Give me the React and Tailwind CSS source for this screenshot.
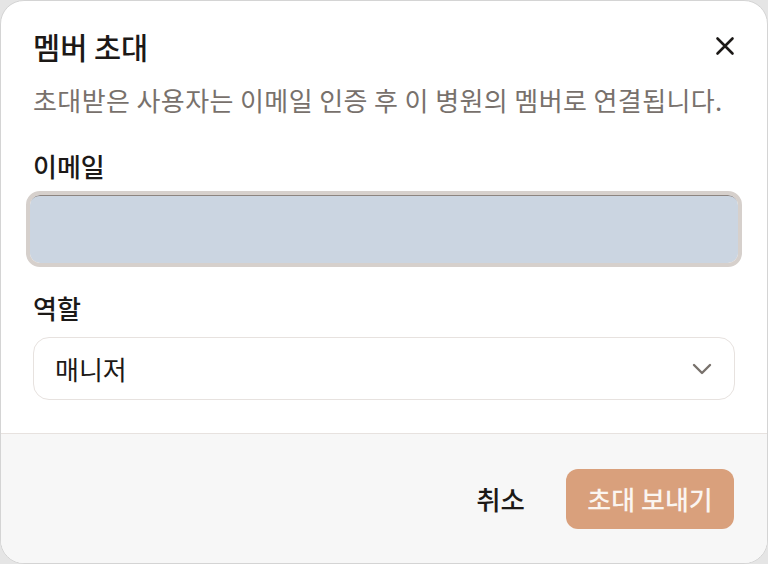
import React from "react";

export default function App() {
  const font = { fontFamily: '"Noto Sans CJK KR", "Noto Sans", sans-serif' };
  return (
    <div className="w-[768px] h-[564px] bg-[#e5e5e5]" style={font}>
      <div className="w-[768px] h-[564px] bg-white border border-[#d4d4d4] rounded-[24px] overflow-hidden flex flex-col">
        <div className="flex flex-col px-[32px] pt-[26px] pb-[32px] flex-1">
          <div className="flex items-center justify-between h-[38px]">
            <h2 className="text-[29.5px] leading-[38px] font-medium text-[#1c1917]">멤버 초대</h2>
            <svg width="22" height="22" viewBox="0 0 22 22" className="-mr-[1px]" fill="none" stroke="#1c1917" strokeWidth="2.6" strokeLinecap="round">
              <path d="M3.5 3.5 L18.5 18.5 M18.5 3.5 L3.5 18.5" />
            </svg>
          </div>
          <p className="mt-[17px] text-[26px] leading-[36px] text-[#78716c] tracking-[0.4px] whitespace-nowrap">
            초대받은 사용자는 이메일 인증 후 이 병원의 멤버로 연결됩니다.
          </p>
          <label className="mt-[30px] text-[26px] leading-[36px] font-medium text-[#1c1917]">이메일</label>
          <div className="mt-[11px] -mx-[3px] h-[68px] rounded-[10px] bg-[#cbd5e1] outline-[4px] outline-solid outline-[#d6d0cc] shadow-[inset_0_2px_0_-1px_#8c8480]"></div>
          <label className="mt-[27px] text-[26px] leading-[36px] font-medium text-[#1c1917]">역할</label>
          <div className="mt-[11px] h-[63px] rounded-[16px] border-[1.5px] border-[#e7e2df] flex items-center justify-between pl-[21px] pr-[22px]">
            <span className="text-[26px] text-[#1c1917]">매니저</span>
            <svg width="20" height="12" viewBox="0 0 20 12" fill="none" stroke="#78716c" strokeWidth="2.4" strokeLinecap="round" strokeLinejoin="round">
              <path d="M2 2 L10 10 L18 2" />
            </svg>
          </div>
        </div>
        <div className="h-[130px] bg-[#f7f7f7] border-t-[1.5px] border-[#e7e2df] flex items-center justify-end gap-[41px] pr-[33px]">
          <span className="text-[26.5px] font-medium text-[#1c1917]">취소</span>
          <button className="w-[168px] h-[60px] rounded-[12px] bg-[#d9a07c] text-[26px] font-medium text-[#fbf5f0]">
            초대 보내기
          </button>
        </div>
      </div>
    </div>
  );
}
